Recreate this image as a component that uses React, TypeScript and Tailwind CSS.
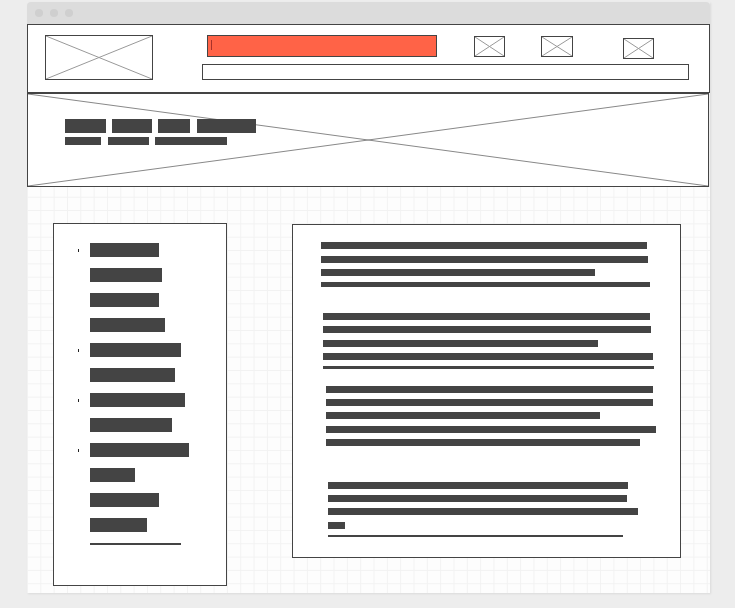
import React from 'react';

// Placeholder image: bordered box with an X across it
function ImageBox({ className }: { className: string }) {
  return (
    <div className={`relative border border-[#444] bg-white ${className}`}>
      <svg className="absolute inset-0 w-full h-full" preserveAspectRatio="none" viewBox="0 0 100 100">
        <line x1="0" y1="0" x2="100" y2="100" stroke="#999" strokeWidth="1" vectorEffect="non-scaling-stroke" />
        <line x1="0" y1="100" x2="100" y2="0" stroke="#999" strokeWidth="1" vectorEffect="non-scaling-stroke" />
      </svg>
    </div>
  );
}

const navItems = [
  { w: 'w-[69px]', bullet: true },
  { w: 'w-[72px]', bullet: false },
  { w: 'w-[69px]', bullet: false },
  { w: 'w-[75px]', bullet: false },
  { w: 'w-[91px]', bullet: true },
  { w: 'w-[85px]', bullet: false },
  { w: 'w-[95px]', bullet: true },
  { w: 'w-[82px]', bullet: false },
  { w: 'w-[99px]', bullet: true },
  { w: 'w-[45px]', bullet: false },
  { w: 'w-[69px]', bullet: false },
  { w: 'w-[57px]', bullet: false },
];

// Text lines of the article, one block per paragraph
const paragraphs = [
  {
    ml: 'ml-[28px]',
    lines: [
      'mt-[17px] w-[326px] h-[7px]',
      'mt-[7px] w-[327px] h-[7px]',
      'mt-[6px] w-[274px] h-[7px]',
      'mt-[6px] w-[329px] h-[5px]',
    ],
  },
  {
    ml: 'ml-[30px]',
    lines: [
      'mt-[26px] w-[327px] h-[7px]',
      'mt-[6px] w-[328px] h-[7px]',
      'mt-[7px] w-[275px] h-[7px]',
      'mt-[6px] w-[330px] h-[7px]',
      'mt-[6px] w-[331px] h-[3px]',
    ],
  },
  {
    ml: 'ml-[33px]',
    lines: [
      'mt-[17px] w-[327px] h-[7px]',
      'mt-[6px] w-[327px] h-[7px]',
      'mt-[6px] w-[274px] h-[7px]',
      'mt-[7px] w-[330px] h-[7px]',
      'mt-[6px] w-[314px] h-[7px]',
    ],
  },
  {
    ml: 'ml-[35px]',
    lines: [
      'mt-[36px] w-[300px] h-[7px]',
      'mt-[6px] w-[299px] h-[7px]',
      'mt-[6px] w-[310px] h-[7px]',
      'mt-[7px] w-[17px] h-[7px]',
      'mt-[6px] w-[295px] h-[2px]',
    ],
  },
];

export default function App() {
  return (
    <div className="w-[735px] h-[608px] bg-[#ededed] pt-[2px] pl-[27px] overflow-hidden">
      <div className="w-[683px] flex flex-col shadow-[1px_1px_2px_rgba(0,0,0,0.08)]">
        {/* Browser chrome */}
        <div className="h-[22px] bg-[#dcdcdc] rounded-t-[4px] flex items-center gap-[7px] pl-[8px]">
          <span className="w-[8px] h-[8px] rounded-full bg-[#cfcfcf]" />
          <span className="w-[8px] h-[8px] rounded-full bg-[#cfcfcf]" />
          <span className="w-[8px] h-[8px] rounded-full bg-[#cfcfcf]" />
        </div>

        {/* Header */}
        <div className="h-[69px] bg-white border border-[#444] flex">
          <ImageBox className="ml-[17px] mt-[10px] w-[108px] h-[45px]" />
          <div className="ml-[49px] pt-[10px] flex flex-col">
            <div className="h-[22px] flex items-start">
              <div className="ml-[5px] w-[230px] h-[22px] bg-[#ff6347] border border-[#444] flex">
                <span className="ml-[3px] mt-[4px] w-[1px] h-[10px] bg-[#a8322a]" />
              </div>
              <ImageBox className="ml-[37px] mt-[1px] w-[31px] h-[21px]" />
              <ImageBox className="ml-[36px] mt-[1px] w-[32px] h-[21px]" />
              <ImageBox className="ml-[50px] mt-[3px] w-[31px] h-[21px]" />
            </div>
            <div className="mt-[7px] w-[487px] h-[16px] border border-[#444] bg-white" />
          </div>
        </div>

        {/* Hero */}
        <div className="relative w-[682px] h-[94px] bg-white border border-[#444]">
          <svg className="absolute inset-0 w-full h-full" preserveAspectRatio="none" viewBox="0 0 100 100">
            <line x1="0" y1="0" x2="100" y2="100" stroke="#888" strokeWidth="1" vectorEffect="non-scaling-stroke" />
            <line x1="0" y1="100" x2="100" y2="0" stroke="#888" strokeWidth="1" vectorEffect="non-scaling-stroke" />
          </svg>
          <div className="relative pl-[37px] pt-[25px] flex flex-col">
            <div className="flex h-[14px]">
              <span className="w-[41px] bg-[#444]" />
              <span className="ml-[6px] w-[40px] bg-[#444]" />
              <span className="ml-[6px] w-[32px] bg-[#444]" />
              <span className="ml-[7px] w-[59px] bg-[#444]" />
            </div>
            <div className="mt-[4px] flex h-[8px]">
              <span className="w-[36px] bg-[#444]" />
              <span className="ml-[7px] w-[41px] bg-[#444]" />
              <span className="ml-[6px] w-[72px] bg-[#444]" />
            </div>
          </div>
        </div>

        {/* Main */}
        <div className="h-[406px] bg-[#fdfdfd] bg-[linear-gradient(to_right,#f2f2f2_1px,transparent_1px),linear-gradient(to_bottom,#f2f2f2_1px,transparent_1px)] bg-[size:13.33px_13.33px] bg-[position:0_-3.6px] flex items-start pl-[26px] pt-[36px]">
          <div className="w-[174px] h-[363px] bg-white border border-[#444] pt-[19px] flex flex-col gap-[11px]">
            {navItems.map((item, i) => (
              <div key={i} className="flex items-center h-[14px] pl-[24px]">
                <span className="w-[12px] flex">
                  {item.bullet && <span className="w-[1px] h-[3px] bg-[#222]" />}
                </span>
                <span className={`h-[14px] bg-[#444] ${item.w}`} />
              </div>
            ))}
            <div className="pl-[36px]">
              <div className="w-[91px] h-[2px] bg-[#444]" />
            </div>
          </div>

          <div className="ml-[65px] mt-[1px] w-[389px] h-[334px] bg-white border border-[#444] flex flex-col">
            {paragraphs.map((p, i) => (
              <div key={i} className={`flex flex-col ${p.ml}`}>
                {p.lines.map((cls, j) => (
                  <div key={j} className={`bg-[#444] ${cls}`} />
                ))}
              </div>
            ))}
          </div>
        </div>
      </div>
    </div>
  );
}
